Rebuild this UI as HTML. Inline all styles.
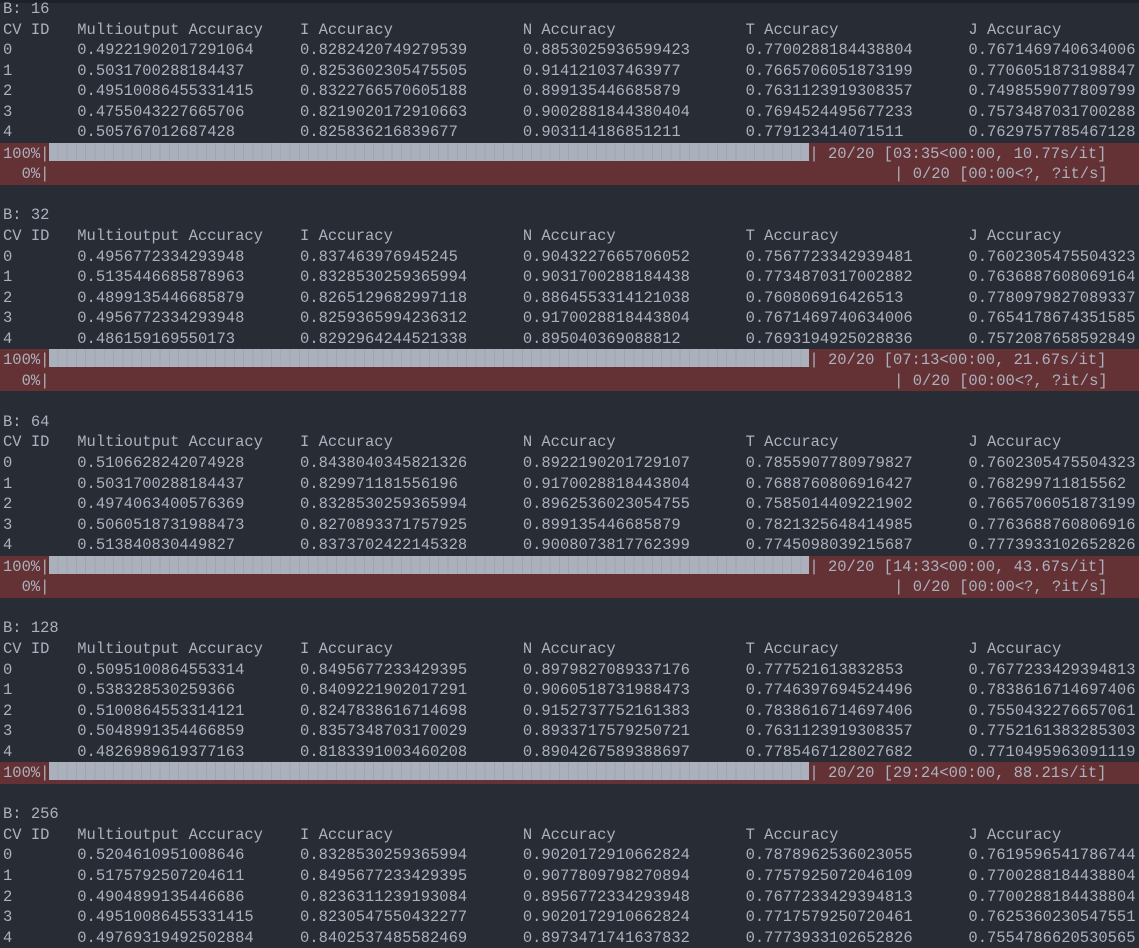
<!DOCTYPE html>
<html><head><meta charset="utf-8"><style>
html,body{margin:0;padding:0;background:#282c34;width:1139px;height:941px;overflow:hidden}
.top{position:absolute;left:0;top:0;width:1139px;height:3px;background:#1e2127}
pre{position:absolute;left:3px;top:-1px;margin:0;font-family:"Liberation Mono",monospace;font-size:15.48px;line-height:20.55px;color:#abb2bf;white-space:pre}
.band{display:block;background:#643234;margin-left:-3px;padding-left:3px;width:1139px}
.bar{display:inline-block;width:760px;height:18px;vertical-align:-3px;background:repeating-linear-gradient(90deg,#aab0bc 0 8.3px,#9ea4b0 8.3px 9.29px)}
</style></head><body><div class="top"></div>
<pre>B: 16
CV ID   Multioutput Accuracy    I Accuracy              N Accuracy              T Accuracy              J Accuracy
0       0.49221902017291064     0.8282420749279539      0.8853025936599423      0.7700288184438804      0.7671469740634006
1       0.5031700288184437      0.8253602305475505      0.914121037463977       0.7665706051873199      0.7706051873198847
2       0.49510086455331415     0.8322766570605188      0.899135446685879       0.7631123919308357      0.7498559077809799
3       0.4755043227665706      0.8219020172910663      0.9002881844380404      0.7694524495677233      0.7573487031700288
4       0.505767012687428       0.825836216839677       0.903114186851211       0.779123414071511       0.7629757785467128
<span class="band">100%|<span class="bar"></span>| 20/20 [03:35&lt;00:00, 10.77s/it]
  0%|                                                                                           | 0/20 [00:00&lt;?, ?it/s]</span>
B: 32
CV ID   Multioutput Accuracy    I Accuracy              N Accuracy              T Accuracy              J Accuracy
0       0.4956772334293948      0.837463976945245       0.9043227665706052      0.7567723342939481      0.7602305475504323
1       0.5135446685878963      0.8328530259365994      0.9031700288184438      0.7734870317002882      0.7636887608069164
2       0.4899135446685879      0.8265129682997118      0.8864553314121038      0.760806916426513       0.7780979827089337
3       0.4956772334293948      0.8259365994236312      0.9170028818443804      0.7671469740634006      0.7654178674351585
4       0.486159169550173       0.8292964244521338      0.895040369088812       0.7693194925028836      0.7572087658592849
<span class="band">100%|<span class="bar"></span>| 20/20 [07:13&lt;00:00, 21.67s/it]
  0%|                                                                                           | 0/20 [00:00&lt;?, ?it/s]</span>
B: 64
CV ID   Multioutput Accuracy    I Accuracy              N Accuracy              T Accuracy              J Accuracy
0       0.5106628242074928      0.8438040345821326      0.8922190201729107      0.7855907780979827      0.7602305475504323
1       0.5031700288184437      0.829971181556196       0.9170028818443804      0.7688760806916427      0.768299711815562
2       0.4974063400576369      0.8328530259365994      0.8962536023054755      0.7585014409221902      0.7665706051873199
3       0.5060518731988473      0.8270893371757925      0.899135446685879       0.7821325648414985      0.7763688760806916
4       0.513840830449827       0.8373702422145328      0.9008073817762399      0.7745098039215687      0.7773933102652826
<span class="band">100%|<span class="bar"></span>| 20/20 [14:33&lt;00:00, 43.67s/it]
  0%|                                                                                           | 0/20 [00:00&lt;?, ?it/s]</span>
B: 128
CV ID   Multioutput Accuracy    I Accuracy              N Accuracy              T Accuracy              J Accuracy
0       0.5095100864553314      0.8495677233429395      0.8979827089337176      0.777521613832853       0.7677233429394813
1       0.538328530259366       0.8409221902017291      0.9060518731988473      0.7746397694524496      0.7838616714697406
2       0.5100864553314121      0.8247838616714698      0.9152737752161383      0.7838616714697406      0.7550432276657061
3       0.5048991354466859      0.8357348703170029      0.8933717579250721      0.7631123919308357      0.7752161383285303
4       0.4826989619377163      0.8183391003460208      0.8904267589388697      0.7785467128027682      0.7710495963091119
<span class="band">100%|<span class="bar"></span>| 20/20 [29:24&lt;00:00, 88.21s/it]</span>
B: 256
CV ID   Multioutput Accuracy    I Accuracy              N Accuracy              T Accuracy              J Accuracy
0       0.5204610951008646      0.8328530259365994      0.9020172910662824      0.7878962536023055      0.7619596541786744
1       0.5175792507204611      0.8495677233429395      0.9077809798270894      0.7757925072046109      0.7700288184438804
2       0.4904899135446686      0.8236311239193084      0.8956772334293948      0.7677233429394813      0.7700288184438804
3       0.49510086455331415     0.8230547550432277      0.9020172910662824      0.7717579250720461      0.7625360230547551
4       0.49769319492502884     0.8402537485582469      0.8973471741637832      0.7773933102652826      0.7554786620530565</pre>
</body></html>
